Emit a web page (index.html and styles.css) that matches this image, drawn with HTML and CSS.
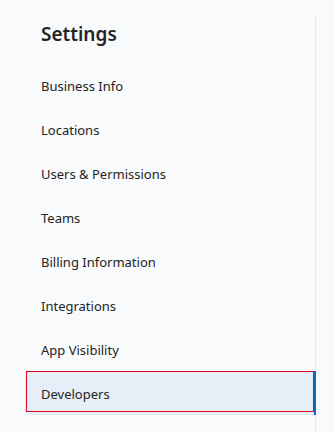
FILE: index.html
```html
<!DOCTYPE html>
<html lang="en">
<head>
    <meta charset="UTF-8">
    <meta name="viewport" content="width=device-width, initial-scale=1.0">
    <title>Settings</title>
    <link rel="stylesheet" href="styles.css">
</head>
<body>

    <!-- Settings side navigation -->
    <nav class="sidebar">
        <h2 class="sidebar-title">Settings</h2>
        <ul class="nav-list">
            <li class="nav-item"><a href="#">Business Info</a></li>
            <li class="nav-item"><a href="#">Locations</a></li>
            <li class="nav-item"><a href="#">Users &amp; Permissions</a></li>
            <li class="nav-item"><a href="#">Teams</a></li>
            <li class="nav-item"><a href="#">Billing Information</a></li>
            <li class="nav-item"><a href="#">Integrations</a></li>
            <li class="nav-item"><a href="#">App Visibility</a></li>
            <li class="nav-item active"><a href="#" class="focused">Developers</a></li>
        </ul>
    </nav>

</body>
</html>
```

FILE: styles.css
```css
body {
    margin: 0;
    background-color: #f9fafc;
    font-family: "Noto Sans", "Open Sans", sans-serif;
    color: #242424;
}
.sidebar {
    width: 290px;
    min-height: 414px;
    margin: 18px 0 0 25px;
    border-right: 1px solid #e3e5e8;
}
.sidebar-title {
    margin: 0 0 15px 0;
    padding: 2px 16px 0 16px;
    font-size: 19px;
    line-height: 28px;
    font-weight: 600;
}
.nav-list {
    list-style: none;
    margin: 0;
    padding: 0;
}
.nav-item {
    height: 44px;
}
.nav-item a {
    display: block;
    height: 44px;
    padding-left: 16px;
    line-height: 46px;
    font-size: 13px;
    color: #242424;
    text-decoration: none;
}
.nav-item.active {
    margin-right: -1px;
    background-color: #e6eef8;
    border-right: 2px solid #0f6cbd;
}
.nav-item a.focused {
    height: 39px;
    line-height: 45px;
    margin-left: 1px;
    padding-left: 14px;
    border: 1px solid #e00b1c;
}
```
